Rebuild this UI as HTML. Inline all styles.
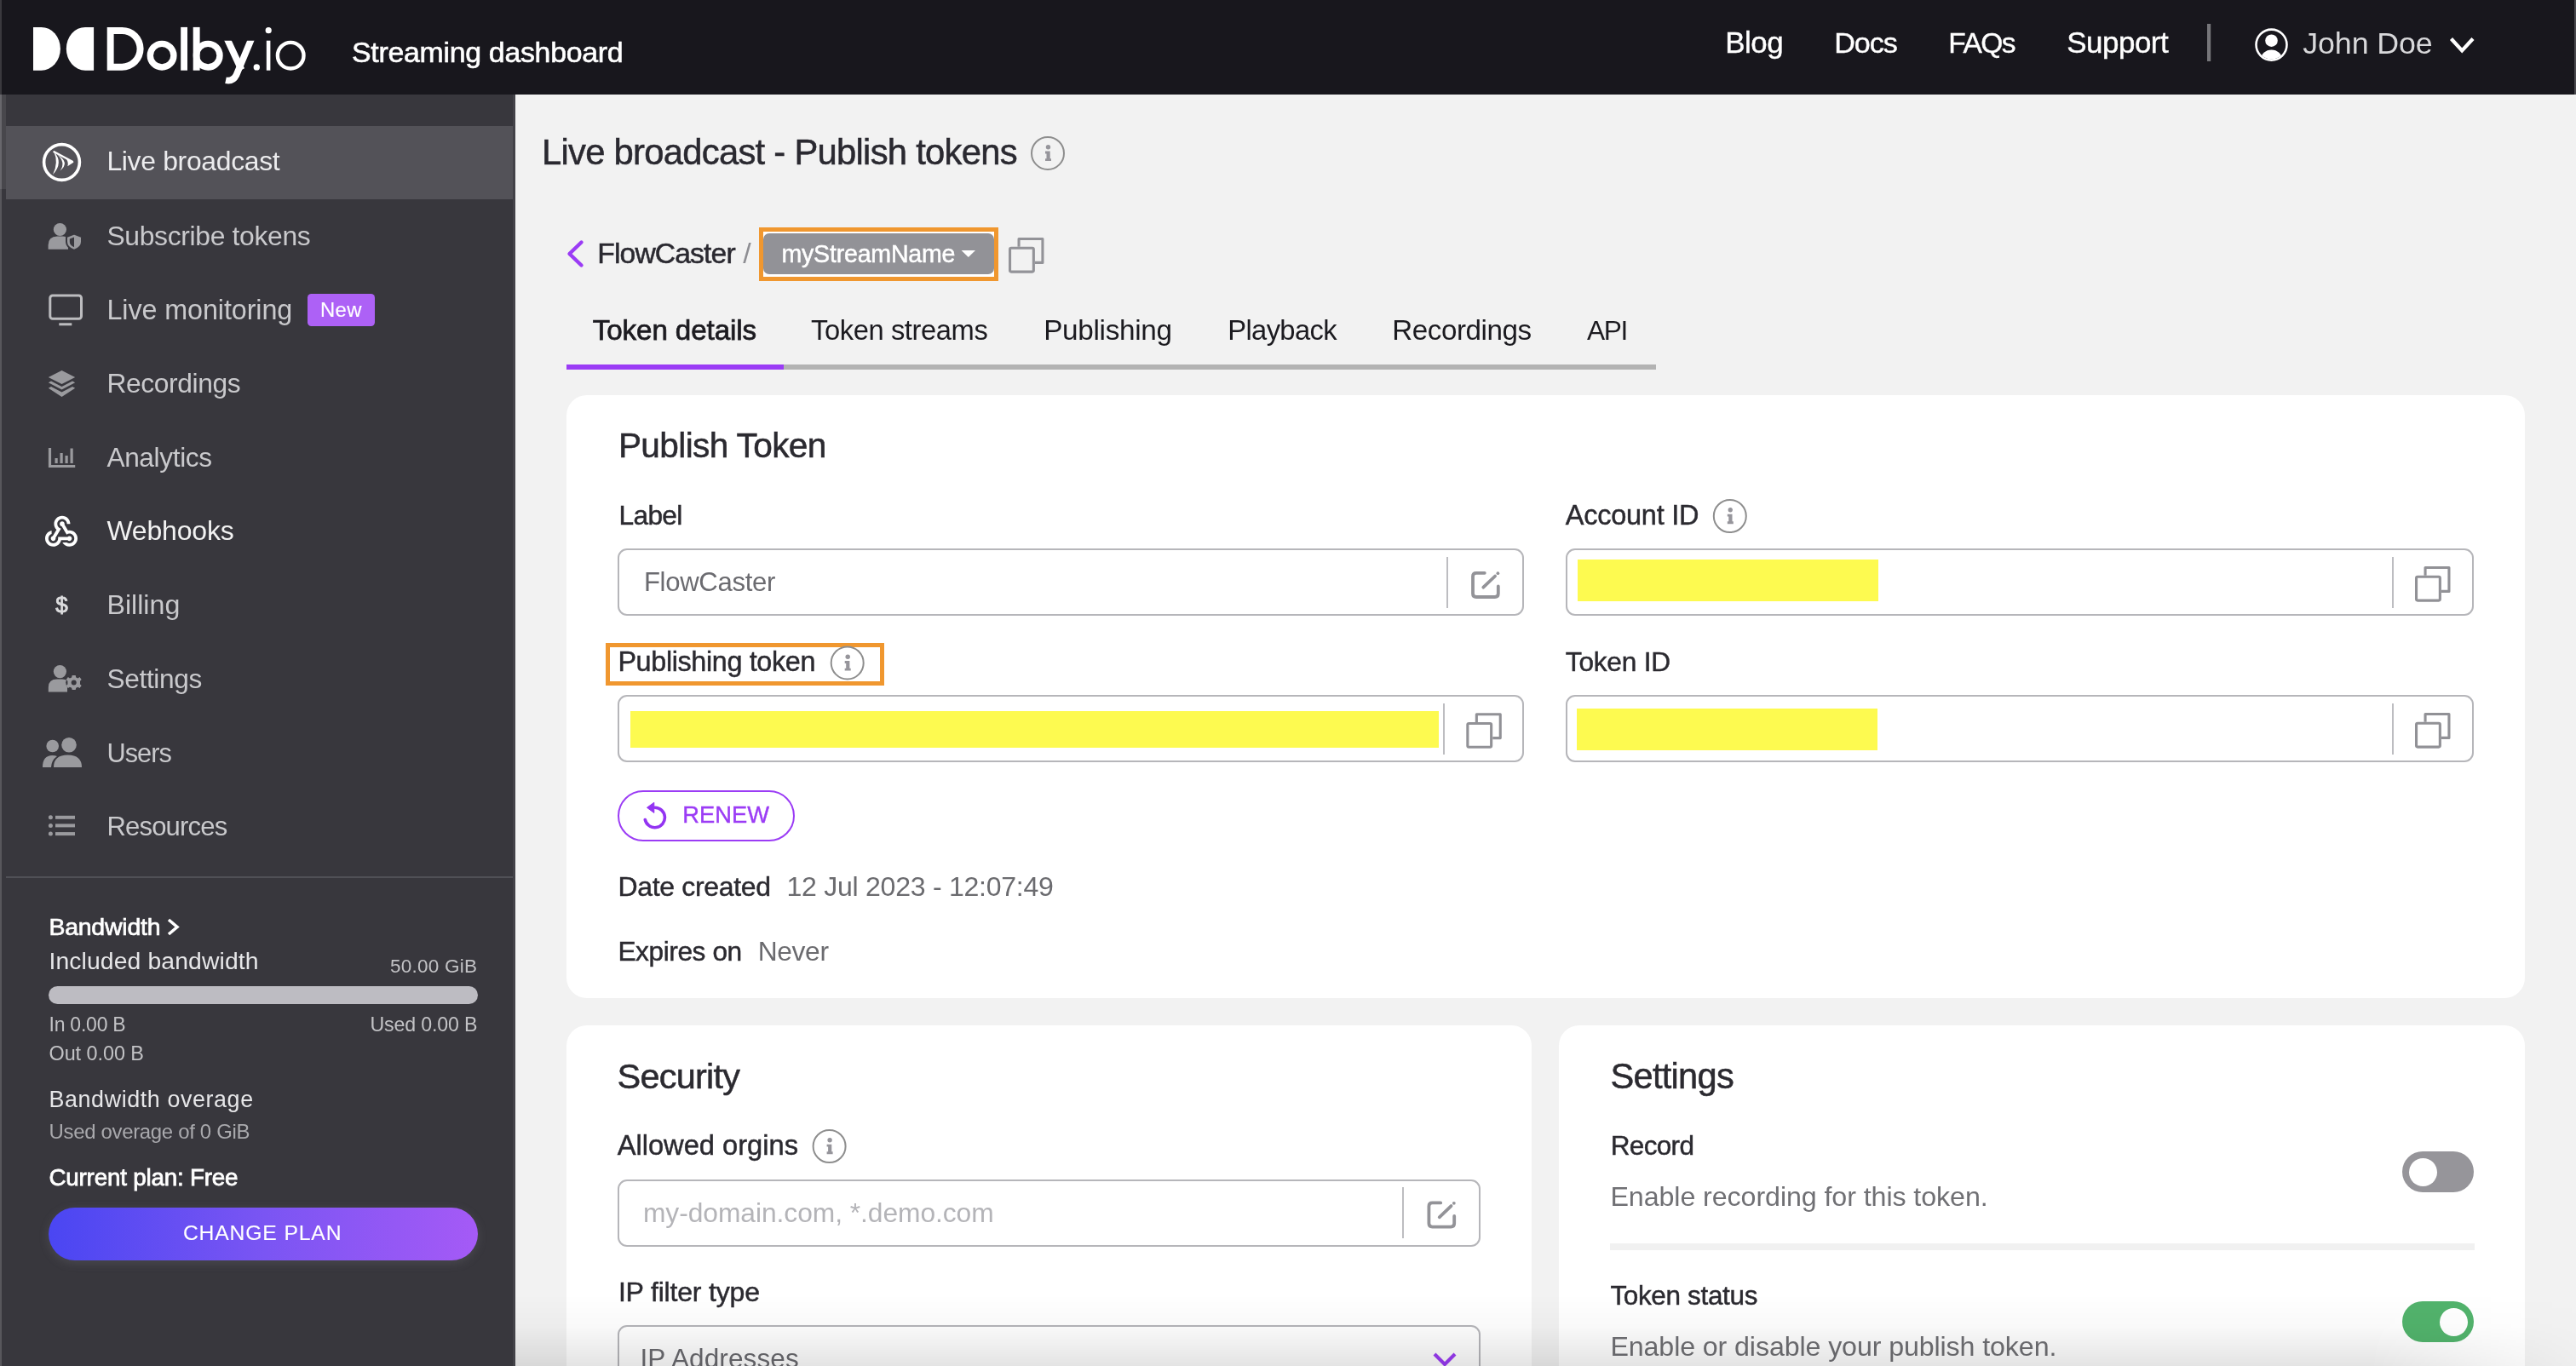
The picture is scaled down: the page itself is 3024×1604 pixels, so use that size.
<!DOCTYPE html>
<html><head><meta charset="utf-8"><title>Dolby.io Streaming dashboard</title>
<style>
html,body{margin:0;padding:0;width:3024px;height:1604px;overflow:hidden;background:#f2f2f2;font-family:"Liberation Sans",sans-serif;}
.abs{position:absolute;box-sizing:border-box;}
#header{left:0;top:0;width:3024px;height:111px;background:#18171d;}
#sidebar{left:0;top:111px;width:605px;height:1493px;background:#38373d;}
.card{background:#fff;border-radius:24px;}
.inp{border:2px solid #b6b6ba;border-radius:11px;background:#fff;}
.vdiv{width:2px;background:#bdbdc1;}
.yel{background:#fdfa50;}
svg{position:absolute;left:0;top:0;will-change:transform;}
</style></head><body>
<div class="abs" id="header"></div>
<div class="abs" style="left:3022px;top:0;width:2px;height:111px;background:#4a494e"></div>
<div class="abs" id="sidebar"></div>
<div class="abs" style="left:0;top:0;width:2px;height:1604px;background:#58575c"></div>
<div class="abs" style="left:0;top:0;width:2px;height:111px;background:#3a393e"></div>
<div class="abs" style="left:0;top:111px;width:2px;height:111px;background:#68676c"></div>
<div class="abs" style="left:2px;top:111px;width:5px;height:111px;background:#48474c"></div>
<div class="abs" style="left:7px;top:148px;width:598px;height:86px;background:#535258"></div>
<div class="abs" style="left:602px;top:111px;width:3px;height:1493px;background:#434248"></div>
<div class="abs" style="left:7px;top:1029px;width:595px;height:2px;background:#505056"></div>
<div class="abs" style="left:57px;top:1158px;width:504px;height:21px;border-radius:11px;background:#bdbcc2"></div>
<div class="abs" style="left:57px;top:1418px;width:504px;height:62px;border-radius:31px;background:linear-gradient(90deg,#4a46f2 0%,#7a55f3 50%,#a55af6 100%);box-shadow:0 3px 12px rgba(140,140,150,0.22)"></div>
<div class="abs" style="left:360.5px;top:345px;width:79px;height:38px;border-radius:4.5px;background:#ad61f6"></div>

<!-- breadcrumb pill -->
<div class="abs" style="left:891px;top:267px;width:281px;height:63px;border:5px solid #f0972f;background:#fff"></div>
<div class="abs" style="left:896px;top:274px;width:271px;height:48px;border-radius:7px;background:#929297"></div>
<!-- tabs underline -->
<div class="abs" style="left:665px;top:428px;width:1279px;height:6px;background:#b3b3b3"></div>
<div class="abs" style="left:665px;top:428px;width:255px;height:6px;background:#9b3cf5"></div>

<!-- cards -->
<div class="abs card" style="left:665px;top:464px;width:2299px;height:708px"></div>
<div class="abs card" style="left:665px;top:1204px;width:1133px;height:500px"></div>
<div class="abs card" style="left:1830px;top:1204px;width:1134px;height:500px"></div>

<!-- inputs -->
<div class="abs inp" style="left:725px;top:644px;width:1064px;height:79px"></div>
<div class="abs vdiv" style="left:1698px;top:654px;height:60px"></div>
<div class="abs inp" style="left:1838px;top:644px;width:1066px;height:79px"></div>
<div class="abs vdiv" style="left:2808px;top:654px;height:60px"></div>
<div class="abs yel" style="left:1852px;top:657px;width:353px;height:49px"></div>
<div class="abs inp" style="left:725px;top:816px;width:1064px;height:79px"></div>
<div class="abs vdiv" style="left:1694px;top:826px;height:60px"></div>
<div class="abs yel" style="left:740px;top:835px;width:949px;height:43px"></div>
<div class="abs inp" style="left:1838px;top:816px;width:1066px;height:79px"></div>
<div class="abs vdiv" style="left:2808px;top:826px;height:60px"></div>
<div class="abs yel" style="left:1851px;top:832px;width:353px;height:49px"></div>
<div class="abs" style="left:711px;top:755px;width:327px;height:50px;border:5px solid #f0972f"></div>
<div class="abs" style="left:725px;top:928px;width:208px;height:60px;border:2.5px solid #9b3cf5;border-radius:30px"></div>

<div class="abs inp" style="left:725px;top:1385px;width:1013px;height:79px"></div>
<div class="abs vdiv" style="left:1646px;top:1394px;height:60px"></div>
<div class="abs inp" style="left:725px;top:1556px;width:1013px;height:79px"></div>

<div class="abs" style="left:1890px;top:1460px;width:1015px;height:8px;background:#f1f1f1"></div>
<div class="abs" style="left:2820px;top:1352px;width:84px;height:48px;border-radius:24px;background:#96959a"></div>
<div class="abs" style="left:2827.5px;top:1359.5px;width:33px;height:33px;border-radius:17px;background:#fff"></div>
<div class="abs" style="left:2820px;top:1528px;width:84px;height:48px;border-radius:24px;background:#52b36c"></div>
<div class="abs" style="left:2863.5px;top:1535.5px;width:33px;height:33px;border-radius:17px;background:#fff"></div>

<svg width="3024" height="1604" viewBox="0 0 3024 1604" font-family="Liberation Sans, sans-serif">
<path d="M39 31.9H48.5A22.4 25.4 0 0 1 48.5 82.7H39Z" fill="#ffffff"/>
<path d="M110.1 31.9H100A22.2 25.4 0 0 0 100 82.7H110.1Z" fill="#ffffff"/>
<path fill-rule="evenodd" d="M125.7 31.9H143.2A25.4 25.4 0 0 1 143.2 82.7H125.7Z M133.6 39.9H143.2A17.4 17.4 0 0 1 143.2 74.7H133.6Z" fill="#ffffff"/>
<circle cx="190.1" cy="65.2" r="13.8" fill="none" stroke="#ffffff" stroke-width="7.4"/>
<rect x="212.2" y="31.9" width="7.8" height="50.8" fill="#ffffff"/>
<rect x="226.7" y="31.9" width="7.9" height="50.8" fill="#ffffff"/>
<circle cx="244.2" cy="65.2" r="13.8" fill="none" stroke="#ffffff" stroke-width="7.4"/>
<clipPath id="yc"><rect x="255" y="47.7" width="50" height="55"/></clipPath>
<g clip-path="url(#yc)"><path d="M264 40L283.5 82" stroke="#ffffff" stroke-width="7.8"/><path d="M297.5 40L277.5 88Q273.5 96 265 94.3" fill="none" stroke="#ffffff" stroke-width="7.8"/></g>
<circle cx="301.3" cy="78.9" r="3.7" fill="#ffffff"/>
<rect x="312.8" y="47.7" width="4.6" height="35" fill="#ffffff"/>
<circle cx="315.2" cy="35.7" r="3.6" fill="#ffffff"/>
<circle cx="341.2" cy="65.2" r="15.3" fill="none" stroke="#ffffff" stroke-width="4.4"/>
<rect x="2591" y="28" width="4.2" height="44" fill="#76767a"/>
<circle cx="2666.5" cy="52.6" r="18" fill="none" stroke="#ffffff" stroke-width="2.6"/>
<circle cx="2666.5" cy="47.7" r="7.3" fill="#ffffff"/>
<clipPath id="uc"><circle cx="2666.5" cy="52.6" r="17"/></clipPath>
<ellipse cx="2666.5" cy="70" rx="12.5" ry="11.5" fill="#ffffff" clip-path="url(#uc)"/>
<path d="M2877.5 45.5L2890.2 59.5L2903 45.5" fill="none" stroke="#ffffff" stroke-width="4.2"/>
<circle cx="72.5" cy="190.5" r="20.9" fill="none" stroke="#ffffff" stroke-width="3.6"/>
<path d="M63.3 178Q75 191 62 205Q69 191 63.3 178Z" fill="#ffffff"/>
<path d="M67 181.5Q82.8 190.5 70.5 200.5Q77.8 190.5 67 181.5Z" fill="#ffffff"/>
<path d="M76.2 184.3L86.6 190.5L79.3 195.3Q81 190 76.2 184.3Z" fill="#ffffff"/>
<path d="M63.5 178.2L85 189.8" stroke="#ffffff" stroke-width="2.4" stroke-linecap="round"/>
<circle cx="70.4" cy="269.5" r="7.6" fill="#9a9a9e"/>
<path d="M56.6 292.7V288Q56.6 277.5 67 277.5H74Q78 277.5 80 279V292.7Z" fill="#9a9a9e"/>
<path d="M87 274.5L96 278V284Q96 290.5 87 294Q78 290.5 78 284V278Z" fill="#9a9a9e" stroke="#38373d" stroke-width="2"/>
<path d="M87 278.5V290.3Q81.8 288 81.8 284V280.5Z" fill="#38373d"/>
<rect x="58.8" y="347" width="36.7" height="27.3" rx="3" fill="none" stroke="#bcbcbf" stroke-width="3"/>
<rect x="69.3" y="379.3" width="15" height="3" fill="#bcbcbf"/>
<path d="M72.5 435L88.2 443L72.5 451L56.8 443Z" fill="#9a9a9e"/>
<path d="M60 447.5L72.5 454L85 447.5L88.2 449.3L72.5 457.5L56.8 449.3Z" fill="#9a9a9e"/>
<path d="M60 454L72.5 460.5L85 454L88.2 455.8L72.5 466L56.8 455.8Z" fill="#9a9a9e"/>
<path d="M58.5 526V547.5H88.2" fill="none" stroke="#9a9a9e" stroke-width="3.2"/>
<rect x="64.5" y="538" width="3.2" height="6" fill="#9a9a9e"/><rect x="70.5" y="532" width="3.2" height="12" fill="#9a9a9e"/><rect x="76.5" y="535" width="3.2" height="9" fill="#9a9a9e"/><rect x="82.5" y="526.5" width="3.2" height="17.5" fill="#9a9a9e"/>
<g transform="translate(49.2 601.9) scale(1.9)"><path fill="#ffffff" d="M10 15h5.88c.27-.31.67-.5 1.12-.5.83 0 1.5.67 1.5 1.5s-.67 1.5-1.5 1.5c-.44 0-.84-.19-1.12-.5H11.9c-.46 2.28-2.48 4-4.9 4-2.76 0-5-2.24-5-5 0-2.42 1.72-4.44 4-4.9v2.070c-1.16.41-2 1.53-2 2.83 0 1.65 1.35 3 3 3s3-1.35 3-3v-1zm2.5-11c1.65 0 3 1.35 3 3h2c0-2.76-2.24-5-5-5s-5 2.24-5 5c0 1.43.6 2.71 1.550 3.62l-2.350 3.9c-.68.14-1.2.75-1.2 1.48 0 .83.67 1.5 1.5 1.5s1.5-.67 1.5-1.5c0-.16-.02-.31-.07-.45l3.38-5.63C10.49 9.61 9.5 8.42 9.5 7c0-1.65 1.35-3 3-3zm4.5 9c-.64 0-1.23.2-1.72.54l-3.05-5.07C11.53 8.35 11 7.74 11 7c0-.83.67-1.5 1.5-1.5S14 6.17 14 7c0 .15-.02.29-.06.43l2.19 3.65c.28-.05.57-.08.87-.08 2.76 0 5 2.24 5 5s-2.24 5-5 5c-1.85 0-3.47-1.01-4.33-2.5h2.67c.48.32 1.05.5 1.66.5 1.65 0 3-1.35 3-3s-1.35-3-3-3z"/></g>
<text x="65.3" y="718.5" font-size="26" fill="#dcdcde" stroke="#dcdcde" stroke-width="0.9" font-family="Liberation Sans, sans-serif">$</text>
<circle cx="70.4" cy="788.6" r="7.6" fill="#9a9a9e"/>
<path d="M56.8 812.4V807Q56.8 797.5 67 797.5H73Q77 797.5 79 799V812.4Z" fill="#9a9a9e"/>
<g transform="translate(86.7 801.6)"><circle r="9.5" fill="#38373d"/><path d="M-2 -8.5H2L2.6 -6.2L4.8 -5.2L6.8 -6.5L9 -3.5L7.3 -1.8V1.8L9 3.5L6.8 6.5L4.8 5.2L2.6 6.2L2 8.5H-2L-2.6 6.2L-4.8 5.2L-6.8 6.5L-9 3.5L-7.3 1.8V-1.8L-9 -3.5L-6.8 -6.5L-4.8 -5.2L-2.6 -6.2Z" fill="#9a9a9e"/><circle r="3" fill="#38373d"/></g>
<circle cx="61.7" cy="876" r="7.3" fill="#9a9a9e"/><circle cx="81" cy="874.8" r="8.8" fill="#9a9a9e"/>
<path d="M50 901Q50 887 61.5 887Q64.5 887 67 888Q60.5 892.5 60 901Z" fill="#9a9a9e"/>
<path d="M63 901Q63 886.5 79.5 886.5Q96 886.5 96 901Z" fill="#9a9a9e"/>
<circle cx="59.4" cy="959.8" r="2.5" fill="#9a9a9e"/><circle cx="59.4" cy="969.4" r="2.5" fill="#9a9a9e"/><circle cx="59.4" cy="979.1" r="2.5" fill="#9a9a9e"/>
<rect x="65" y="957.8" width="23" height="4" fill="#9a9a9e"/><rect x="65" y="967.4" width="23" height="4" fill="#9a9a9e"/><rect x="65" y="977.1" width="23" height="4" fill="#9a9a9e"/>
<path d="M198 1080L208 1088.5L198 1097" fill="none" stroke="#ffffff" stroke-width="3.6"/>
<circle cx="1230" cy="179.9" r="19" fill="none" stroke="#8e8e8e" stroke-width="2"/><circle cx="1230.5" cy="172.70000000000002" r="2.7" fill="#96959b"/><path d="M1227 177.6H1232.7V186.20000000000002H1234V189.1H1227V186.20000000000002H1228.5V180.5H1227Z" fill="#96959b"/>
<path d="M682.5 284.5L668.5 298L682.5 311.5" fill="none" stroke="#9b3cf5" stroke-width="4.4" stroke-linecap="round" stroke-linejoin="round"/>
<path d="M1128.6 293.9H1145L1136.8 302.1Z" fill="#ffffff"/>
<rect x="1185.55" y="291.3" width="27.8" height="27.8" rx="1.5" fill="none" stroke="#939398" stroke-width="3.1"/><path d="M1196.05 289.8V280.55H1223.95V308.4H1215" fill="none" stroke="#939398" stroke-width="3.1" stroke-linejoin="round"/>
<path d="M1742.8 672.8H1733.0Q1729.0 672.8 1729.0 676.8V697.0Q1729.0 701.0 1733.0 701.0H1754.8Q1758.8 701.0 1758.8 697.0V688.4" fill="none" stroke="#939398" stroke-width="3.8" stroke-linecap="round"/><path d="M1741.3 689.6999999999999L1755.1 676.5" stroke="#939398" stroke-width="3.8" stroke-linecap="round"/><circle cx="1758.3999999999999" cy="673.1999999999999" r="1.9" fill="#939398"/>
<circle cx="2030.8" cy="606" r="19" fill="none" stroke="#8e8e8e" stroke-width="2"/><circle cx="2031.3" cy="598.8" r="2.7" fill="#96959b"/><path d="M2027.8 603.7H2033.5V612.3H2034.8V615.2H2027.8V612.3H2029.3V606.6H2027.8Z" fill="#96959b"/>
<rect x="2836.55" y="677.3" width="27.8" height="27.8" rx="1.5" fill="none" stroke="#919196" stroke-width="3.1"/><path d="M2847.05 675.8V666.55H2874.95V694.4H2866" fill="none" stroke="#919196" stroke-width="3.1" stroke-linejoin="round"/>
<circle cx="994.7" cy="778.4" r="19" fill="none" stroke="#8e8e8e" stroke-width="2"/><circle cx="995.2" cy="771.1999999999999" r="2.7" fill="#96959b"/><path d="M991.7 776.1H997.4000000000001V784.6999999999999H998.7V787.6H991.7V784.6999999999999H993.2V779.0H991.7Z" fill="#96959b"/>
<rect x="1722.85" y="849.5" width="27.8" height="27.8" rx="1.5" fill="none" stroke="#919196" stroke-width="3.1"/><path d="M1733.35 848.0V838.75H1761.25V866.6H1752.3" fill="none" stroke="#919196" stroke-width="3.1" stroke-linejoin="round"/>
<rect x="2836.55" y="849.3" width="27.8" height="27.8" rx="1.5" fill="none" stroke="#919196" stroke-width="3.1"/><path d="M2847.05 847.8V838.55H2874.95V866.4H2866" fill="none" stroke="#919196" stroke-width="3.1" stroke-linejoin="round"/>
<path d="M768.7 948.3A11.7 11.7 0 1 1 757.3 962.5" fill="none" stroke="#9334f2" stroke-width="3.6" stroke-linecap="round"/>
<path d="M759.5 948.3L767.8 942.3V954.5Z" fill="#9334f2" stroke="#9334f2" stroke-width="1" stroke-linejoin="round"/>
<circle cx="973.6" cy="1346" r="19" fill="none" stroke="#8e8e8e" stroke-width="2"/><circle cx="974.1" cy="1338.8" r="2.7" fill="#96959b"/><path d="M970.6 1343.7H976.3000000000001V1352.3H977.6V1355.2H970.6V1352.3H972.1V1346.6H970.6Z" fill="#96959b"/>
<path d="M1691.2 1412.4H1681.4Q1677.4 1412.4 1677.4 1416.4V1436.6Q1677.4 1440.6 1681.4 1440.6H1703.2Q1707.2 1440.6 1707.2 1436.6V1428.0" fill="none" stroke="#939398" stroke-width="3.8" stroke-linecap="round"/><path d="M1689.7 1429.3L1703.5 1416.1" stroke="#939398" stroke-width="3.8" stroke-linecap="round"/><circle cx="1706.8" cy="1412.8" r="1.9" fill="#939398"/>
<path d="M1684 1590L1696 1602L1708 1590" fill="none" stroke="#9b3cf5" stroke-width="4.2"/>
<text x="413.0" y="72.8" font-size="33.88" fill="#ffffff" font-weight="normal" textLength="318.6" lengthAdjust="spacing" stroke="#ffffff" stroke-width="0.6">Streaming dashboard</text>
<text x="2025.3" y="61.7" font-size="34.88" fill="#ffffff" font-weight="normal" textLength="68.4" lengthAdjust="spacing" stroke="#ffffff" stroke-width="0.4">Blog</text>
<text x="2153.3" y="61.7" font-size="34.12" fill="#ffffff" font-weight="normal" textLength="74.4" lengthAdjust="spacing" stroke="#ffffff" stroke-width="0.4">Docs</text>
<text x="2287.3" y="61.7" font-size="33.50" fill="#ffffff" font-weight="normal" textLength="79.3" lengthAdjust="spacing" stroke="#ffffff" stroke-width="0.4">FAQs</text>
<text x="2426.3" y="61.7" font-size="34.99" fill="#ffffff" font-weight="normal" textLength="119.4" lengthAdjust="spacing" stroke="#ffffff" stroke-width="0.4">Support</text>
<text x="2703.3" y="63.0" font-size="35.80" fill="#d8d8da" font-weight="normal" textLength="152.4" lengthAdjust="spacing">John Doe</text>
<text x="125.4" y="200.0" font-size="31.87" fill="#ececee" font-weight="normal" textLength="203.3" lengthAdjust="spacing">Live broadcast</text>
<text x="125.4" y="288.0" font-size="31.85" fill="#c9c9cc" font-weight="normal" textLength="239.3" lengthAdjust="spacing">Subscribe tokens</text>
<text x="125.4" y="375.0" font-size="32.32" fill="#c9c9cc" font-weight="normal" textLength="217.9" lengthAdjust="spacing">Live monitoring</text>
<text x="125.4" y="461.0" font-size="31.76" fill="#c9c9cc" font-weight="normal" textLength="157.3" lengthAdjust="spacing">Recordings</text>
<text x="125.4" y="548.0" font-size="31.63" fill="#c9c9cc" font-weight="normal" textLength="123.7" lengthAdjust="spacing">Analytics</text>
<text x="125.4" y="634.0" font-size="32.01" fill="#f2f2f2" font-weight="normal" textLength="149.3" lengthAdjust="spacing">Webhooks</text>
<text x="125.4" y="721.0" font-size="32.20" fill="#c9c9cc" font-weight="normal" textLength="85.9" lengthAdjust="spacing">Billing</text>
<text x="125.4" y="808.0" font-size="31.65" fill="#c9c9cc" font-weight="normal" textLength="112.0" lengthAdjust="spacing">Settings</text>
<text x="125.4" y="895.0" font-size="30.71" fill="#c9c9cc" font-weight="normal" textLength="76.5" lengthAdjust="spacing">Users</text>
<text x="125.4" y="981.0" font-size="31.03" fill="#c9c9cc" font-weight="normal" textLength="141.9" lengthAdjust="spacing">Resources</text>
<text x="376.0" y="371.8" font-size="23.86" fill="#ffffff" font-weight="normal" textLength="48.5" lengthAdjust="spacing" stroke="#ffffff" stroke-width="0.15">New</text>
<text x="57.4" y="1097.5" font-size="28.45" fill="#ffffff" font-weight="normal" textLength="131.1" lengthAdjust="spacing" stroke="#ffffff" stroke-width="0.7">Bandwidth</text>
<text x="57.4" y="1138.4" font-size="28.34" fill="#e6e6e8" font-weight="normal" textLength="246.1" lengthAdjust="spacing">Included bandwidth</text>
<text x="458.0" y="1141.5" font-size="22.53" fill="#c2c2c5" font-weight="normal" textLength="102.0" lengthAdjust="spacing">50.00 GiB</text>
<text x="57.5" y="1211.3" font-size="22.99" fill="#c2c2c5" font-weight="normal" textLength="90.2" lengthAdjust="spacing">In 0.00 B</text>
<text x="434.5" y="1211.3" font-size="23.20" fill="#c2c2c5" font-weight="normal" textLength="125.9" lengthAdjust="spacing">Used 0.00 B</text>
<text x="57.5" y="1245.0" font-size="23.40" fill="#c2c2c5" font-weight="normal" textLength="111.4" lengthAdjust="spacing">Out 0.00 B</text>
<text x="57.5" y="1300.0" font-size="26.89" fill="#e6e6e8" font-weight="normal" textLength="239.6" lengthAdjust="spacing">Bandwidth overage</text>
<text x="57.5" y="1337.0" font-size="23.96" fill="#a9a9ad" font-weight="normal" textLength="236.0" lengthAdjust="spacing">Used overage of 0 GiB</text>
<text x="57.4" y="1392.0" font-size="27.78" fill="#ffffff" font-weight="normal" textLength="222.1" lengthAdjust="spacing" stroke="#ffffff" stroke-width="0.8">Current plan: Free</text>
<text x="214.9" y="1455.7" font-size="24.71" fill="#ffffff" font-weight="normal" textLength="185.6" lengthAdjust="spacing" stroke="#ffffff" stroke-width="0.1">CHANGE PLAN</text>
<text x="635.9" y="193.0" font-size="41.81" fill="#2a2930" font-weight="normal" textLength="558.8" lengthAdjust="spacing" stroke="#2a2930" stroke-width="0.5">Live broadcast - Publish tokens</text>
<text x="701.3" y="309.0" font-size="33.67" fill="#2a2930" font-weight="normal" textLength="162.3" lengthAdjust="spacing" stroke="#2a2930" stroke-width="0.5">FlowCaster</text>
<text x="872.3" y="309.0" font-size="34.00" fill="#8e8e93" font-weight="normal" textLength="13.4" lengthAdjust="spacing">/</text>
<text x="917.4" y="307.8" font-size="28.58" fill="#ffffff" font-weight="normal" textLength="204.1" lengthAdjust="spacing" stroke="#ffffff" stroke-width="0.5">myStreamName</text>
<text x="695.8" y="399.0" font-size="33.19" fill="#1c1b20" font-weight="normal" textLength="192.3" lengthAdjust="spacing" stroke="#1c1b20" stroke-width="0.75">Token details</text>
<text x="952.0" y="399.0" font-size="32.73" fill="#1c1b20" font-weight="normal" textLength="207.8" lengthAdjust="spacing">Token streams</text>
<text x="1225.2" y="399.0" font-size="33.34" fill="#1c1b20" font-weight="normal" textLength="150.8" lengthAdjust="spacing">Publishing</text>
<text x="1441.3" y="399.0" font-size="32.77" fill="#1c1b20" font-weight="normal" textLength="128.3" lengthAdjust="spacing">Playback</text>
<text x="1634.3" y="399.0" font-size="33.20" fill="#1c1b20" font-weight="normal" textLength="163.8" lengthAdjust="spacing">Recordings</text>
<text x="1862.9" y="399.0" font-size="31.69" fill="#1c1b20" font-weight="normal" textLength="48.5" lengthAdjust="spacing">API</text>
<text x="725.9" y="536.7" font-size="40.61" fill="#2b2a30" font-weight="normal" textLength="244.5" lengthAdjust="spacing" stroke="#2b2a30" stroke-width="0.5">Publish Token</text>
<text x="726.4" y="616.0" font-size="31.66" fill="#2b2a30" font-weight="normal" textLength="75.0" lengthAdjust="spacing" stroke="#2b2a30" stroke-width="0.45">Label</text>
<text x="755.9" y="694.4" font-size="31.13" fill="#6b6b70" font-weight="normal" textLength="154.4" lengthAdjust="spacing">FlowCaster</text>
<text x="1837.7" y="616.0" font-size="32.53" fill="#2b2a30" font-weight="normal" textLength="156.8" lengthAdjust="spacing" stroke="#2b2a30" stroke-width="0.45">Account ID</text>
<text x="725.4" y="788.2" font-size="32.35" fill="#2b2a30" font-weight="normal" textLength="232.0" lengthAdjust="spacing" stroke="#2b2a30" stroke-width="0.45">Publishing token</text>
<text x="1837.8" y="788.2" font-size="31.64" fill="#2b2a30" font-weight="normal" textLength="123.3" lengthAdjust="spacing" stroke="#2b2a30" stroke-width="0.45">Token ID</text>
<text x="801.3" y="966.4" font-size="27.32" fill="#9b3cf5" font-weight="normal" textLength="101.7" lengthAdjust="spacing" stroke="#9b3cf5" stroke-width="0.4">RENEW</text>
<text x="725.4" y="1051.7" font-size="31.98" fill="#2b2a30" font-weight="normal" textLength="179.6" lengthAdjust="spacing" stroke="#2b2a30" stroke-width="0.45">Date created</text>
<text x="923.4" y="1051.7" font-size="32.10" fill="#6b6b6f" font-weight="normal" textLength="313.5" lengthAdjust="spacing">12 Jul 2023 - 12:07:49</text>
<text x="725.4" y="1128.0" font-size="31.70" fill="#2b2a30" font-weight="normal" textLength="145.8" lengthAdjust="spacing" stroke="#2b2a30" stroke-width="0.45">Expires on</text>
<text x="889.7" y="1128.0" font-size="31.78" fill="#6b6b6f" font-weight="normal" textLength="83.3" lengthAdjust="spacing">Never</text>
<text x="724.6" y="1278.0" font-size="41.49" fill="#2b2a30" font-weight="normal" textLength="144.3" lengthAdjust="spacing" stroke="#2b2a30" stroke-width="0.5">Security</text>
<text x="724.7" y="1356.3" font-size="32.72" fill="#2b2a30" font-weight="normal" textLength="212.3" lengthAdjust="spacing" stroke="#2b2a30" stroke-width="0.45">Allowed orgins</text>
<text x="754.9" y="1434.5" font-size="31.77" fill="#b4b4b8" font-weight="normal" textLength="411.8" lengthAdjust="spacing">my-domain.com, *.demo.com</text>
<text x="725.9" y="1527.8" font-size="32.09" fill="#2b2a30" font-weight="normal" textLength="166.1" lengthAdjust="spacing" stroke="#2b2a30" stroke-width="0.45">IP filter type</text>
<text x="751.4" y="1606.0" font-size="31.54" fill="#6b6b70" font-weight="normal" textLength="186.3" lengthAdjust="spacing">IP Addresses</text>
<text x="1890.5" y="1278.0" font-size="41.61" fill="#2b2a30" font-weight="normal" textLength="145.2" lengthAdjust="spacing" stroke="#2b2a30" stroke-width="0.5">Settings</text>
<text x="1890.7" y="1356.4" font-size="31.49" fill="#2b2a30" font-weight="normal" textLength="98.2" lengthAdjust="spacing" stroke="#2b2a30" stroke-width="0.45">Record</text>
<text x="1890.4" y="1416.0" font-size="32.24" fill="#707074" font-weight="normal" textLength="443.3" lengthAdjust="spacing">Enable recording for this token.</text>
<text x="1890.4" y="1532.0" font-size="31.46" fill="#2b2a30" font-weight="normal" textLength="173.0" lengthAdjust="spacing" stroke="#2b2a30" stroke-width="0.45">Token status</text>
<text x="1890.4" y="1591.5" font-size="32.21" fill="#707074" font-weight="normal" textLength="524.0" lengthAdjust="spacing">Enable or disable your publish token.</text>
</svg>
<div class="abs" style="left:605px;top:1520px;width:2419px;height:84px;background:linear-gradient(180deg,rgba(0,0,0,0) 0%,rgba(0,0,0,0.025) 45%,rgba(0,0,0,0.105) 100%);-webkit-mask-image:linear-gradient(90deg,#000 0%,#000 90%,rgba(0,0,0,0.15) 100%)"></div>
</body></html>
